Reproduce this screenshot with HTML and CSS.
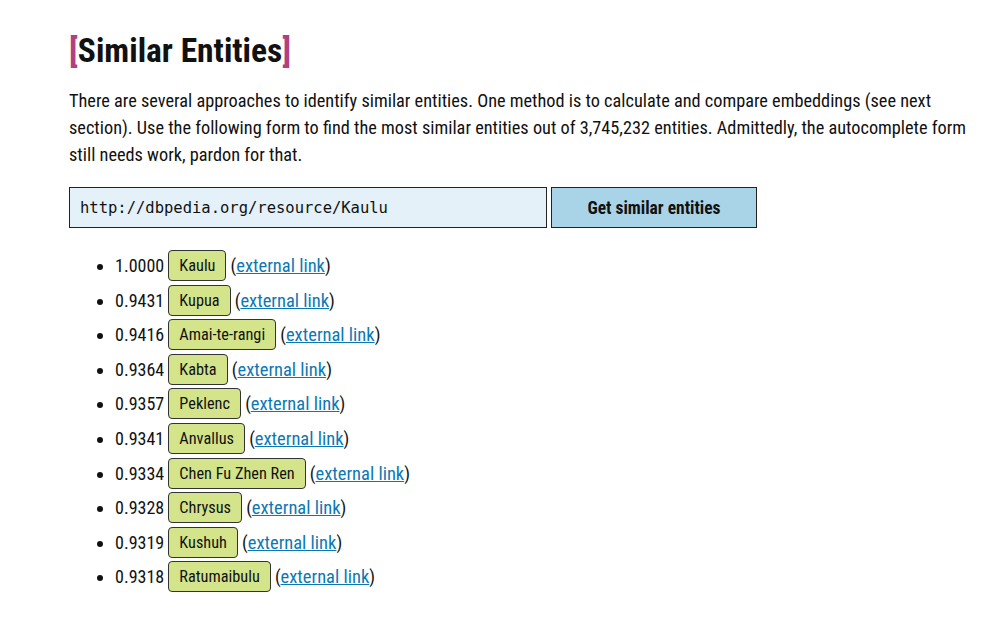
FILE: index.html
```html
<!DOCTYPE html>
<html>
<head>
<meta charset="utf-8">
<link rel="stylesheet" href="styles.css">
</head>
<body>
<div class="page">
  <h2 class="title"><span class="br">[</span>Similar Entities<span class="br">]</span></h2>
  <p class="intro">There are several approaches to identify similar entities. One method is to calculate and compare embeddings (see next section). Use the following form to find the most similar entities out of 3,745,232 entities. Admittedly, the autocomplete form still needs work, pardon for that.</p>
  <form class="form">
    <input class="uri" type="text" value="http://dbpedia.org/resource/Kaulu">
    <button class="btn" type="button">Get similar entities</button>
  </form>
  <ul class="results">
    <li><span class="score">1.0000</span> <span class="tag">Kaulu</span> (<a href="#">external link</a>)</li>
    <li><span class="score">0.9431</span> <span class="tag">Kupua</span> (<a href="#">external link</a>)</li>
    <li><span class="score">0.9416</span> <span class="tag">Amai-te-rangi</span> (<a href="#">external link</a>)</li>
    <li><span class="score">0.9364</span> <span class="tag">Kabta</span> (<a href="#">external link</a>)</li>
    <li><span class="score">0.9357</span> <span class="tag">Peklenc</span> (<a href="#">external link</a>)</li>
    <li><span class="score">0.9341</span> <span class="tag">Anvallus</span> (<a href="#">external link</a>)</li>
    <li><span class="score">0.9334</span> <span class="tag">Chen Fu Zhen Ren</span> (<a href="#">external link</a>)</li>
    <li><span class="score">0.9328</span> <span class="tag">Chrysus</span> (<a href="#">external link</a>)</li>
    <li><span class="score">0.9319</span> <span class="tag">Kushuh</span> (<a href="#">external link</a>)</li>
    <li><span class="score">0.9318</span> <span class="tag">Ratumaibulu</span> (<a href="#">external link</a>)</li>
  </ul>
</div>
</body>
</html>
```
FILE: styles.css
```css
html, body { margin: 0; padding: 0; background: #fff; }
body { font-family: "Roboto", sans-serif; font-stretch: condensed; color: #111; }
.page { padding: 29px 0 0 69px; width: 910px; }
.title { margin: 0; font-size: 33.5px; font-weight: 700; line-height: 44px; letter-spacing: 0; }
.title .br { color: #b23f84; }
.intro { margin: 14px 0 0; font-size: 18.3px; line-height: 27px; }
.form { display: flex; gap: 4px; margin-top: 19px; }
.uri { box-sizing: border-box; width: 478px; height: 41px; border: 1px solid #222; background: #e4f1f8; padding: 0 10px; font-family: "DejaVu Sans Mono", monospace; font-size: 15.5px; color: #111; margin: 0; }
.btn { box-sizing: border-box; width: 206px; height: 41px; border: 1px solid #222; background: #a9d3e7; font-family: "Roboto", sans-serif; font-stretch: condensed; font-weight: 700; font-size: 17.5px; color: #111; margin: 0; }
.results { margin: 22px 0 0; padding-left: 46px; font-size: 18px; }
.results li { height: 34.6px; line-height: 30px; }
.tag { display: inline-block; background: #d3e48b; border: 1px solid #333; border-radius: 4px; padding: 0 10px; font-size: 16.3px; line-height: 29px; vertical-align: 1px; }
.results a { color: #0b78b5; text-decoration: underline; font-size: 18.5px; }
```
